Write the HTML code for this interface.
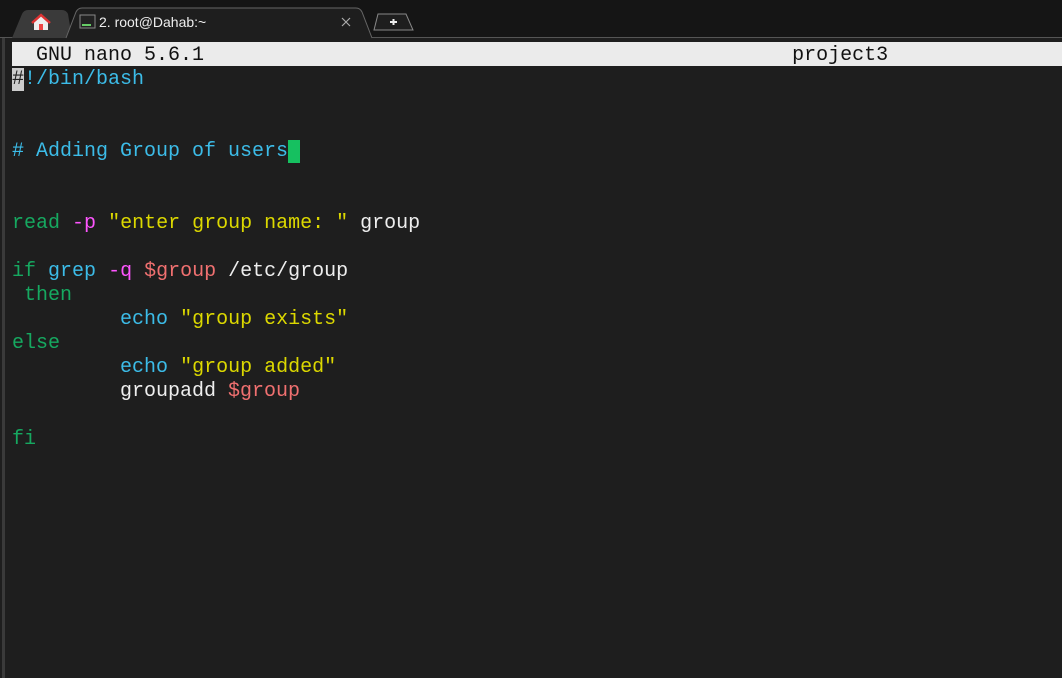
<!DOCTYPE html><html><head><style>
body{margin:0;width:1062px;height:678px;background:#1e1e1e;overflow:hidden;position:relative;font-family:"Liberation Mono",monospace}
#bar{position:absolute;left:0;top:0;width:1062px;height:37px;background:#151515;border-bottom:1px solid #555}
.l{position:absolute;left:12px;height:24px;line-height:24px;font-size:20px;white-space:pre;color:#eee;padding-top:2px}
.c{color:#3cbce8}.g{color:#16a860}.m{color:#ff55ff}.y{color:#dcd800}.r{color:#f07070}
</style></head><body>
<div id="bar"></div>
<svg style="position:absolute;left:0;top:0" width="420" height="40">
<path d="M12 38 L22 14 Q24 10 28 10 L62 10 Q66 10 68 14 L72 38Z" fill="#3a3a3a"/>
<path d="M34 30 V22 L41 16 L48 22 V30Z" fill="#eee"/><path d="M32 23 L41 15 L50 23" stroke="#d33" stroke-width="2.5" fill="none"/><rect x="39" y="24" width="4" height="6" fill="#e44"/>
<path d="M66 38 L76 12 Q78 8 82 8 L356 8 Q360 8 362 12 L372 38" fill="#1e1e1e" stroke="#666"/>
<rect x="80" y="15" width="15" height="13" fill="#222" stroke="#888"/><rect x="82" y="24" width="9" height="2" fill="#6c6"/>
<text x="99" y="27" font-family="Liberation Sans" font-size="14" fill="#eee">2. root@Dahab:~</text>
<path d="M342 18 L350 26 M350 18 L342 26" stroke="#aaa" stroke-width="1.2"/>
<path d="M374 30 L378 14 L406 14 L413 30Z" fill="#1e1e1e" stroke="#888"/>
<path d="M390 22 H397 M393.5 19 V25" stroke="#eee" stroke-width="2"/>
</svg>
<div style="position:absolute;left:2px;top:38px;width:3px;height:640px;background:#3a3a3a"></div>
<div style="position:absolute;left:12px;top:42px;width:1050px;height:24px;background:#ebebeb"></div>
<div class="l" style="top:42px;color:#111">  GNU nano 5.6.1                                                 project3</div>
<div class="l c" style="top:66px"><span style="background:#ccc;color:#222">#</span>!/bin/bash</div>
<div class="l c" style="top:138px"># Adding Group of users<span style="background:#16c060">&nbsp;</span></div>
<div class="l" style="top:210px"><span class="g">read</span> <span class="m">-p</span> <span class="y">"enter group name: "</span> group</div>
<div class="l" style="top:258px"><span class="g">if</span> <span class="c">grep</span> <span class="m">-q</span> <span class="r">$group</span> /etc/group</div>
<div class="l g" style="top:282px"> then</div>
<div class="l" style="top:306px">         <span class="c">echo</span> <span class="y">"group exists"</span></div>
<div class="l g" style="top:330px">else</div>
<div class="l" style="top:354px">         <span class="c">echo</span> <span class="y">"group added"</span></div>
<div class="l" style="top:378px">         groupadd <span class="r">$group</span></div>
<div class="l g" style="top:426px">fi</div>
</body></html>
